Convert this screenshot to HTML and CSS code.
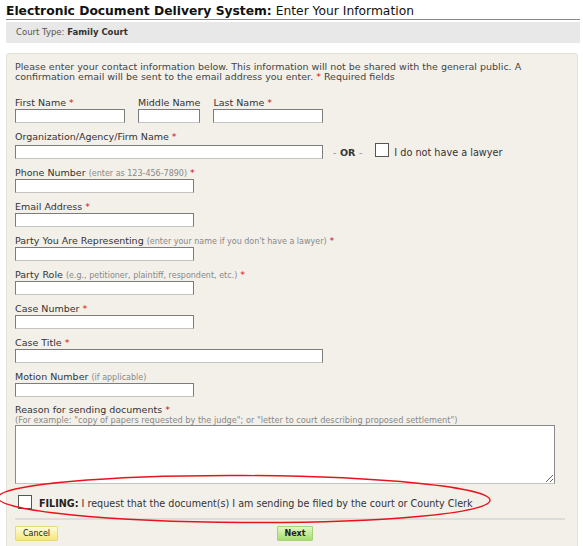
FILE: index.html
```html
<!DOCTYPE html>
<html>
<head>
<meta charset="utf-8">
<link rel="stylesheet" href="styles.css">
</head>
<body>
<div class="page">
  <h1 class="title"><b>Electronic Document Delivery System:</b> Enter Your Information</h1>
  <div class="court">Court Type: <b>Family Court</b></div>
  <div class="panel">
    <p class="intro">Please enter your contact information below. This information will not be shared with the general public. A confirmation email will be sent to the email address you enter. <span class="req">*</span> Required fields</p>

    <div class="names">
      <div class="field">
        <label>First Name <span class="req">*</span></label>
        <input class="in w-first" type="text">
      </div>
      <div class="field">
        <label>Middle Name</label>
        <input class="in w-mid" type="text">
      </div>
      <div class="field">
        <label>Last Name <span class="req">*</span></label>
        <input class="in w-first" type="text">
      </div>
    </div>

    <div class="field org">
      <label>Organization/Agency/Firm Name <span class="req">*</span></label>
      <div class="orgrow">
        <input class="in w-long" type="text">
        <span class="or">- <b>OR</b> -</span>
        <span class="box"></span>
        <span class="nolawyer">I do not have a lawyer</span>
      </div>
    </div>

    <div class="field">
      <label>Phone Number <span class="hint">(enter as 123-456-7890)</span> <span class="req">*</span></label>
      <input class="in w-med" type="text">
    </div>
    <div class="field">
      <label>Email Address <span class="req">*</span></label>
      <input class="in w-med" type="text">
    </div>
    <div class="field">
      <label>Party You Are Representing <span class="hint">(enter your name if you don't have a lawyer)</span> <span class="req">*</span></label>
      <input class="in w-med" type="text">
    </div>
    <div class="field">
      <label>Party Role <span class="hint">(e.g., petitioner, plaintiff, respondent, etc.)</span> <span class="req">*</span></label>
      <input class="in w-med" type="text">
    </div>
    <div class="field">
      <label>Case Number <span class="req">*</span></label>
      <input class="in w-med" type="text">
    </div>
    <div class="field">
      <label>Case Title <span class="req">*</span></label>
      <input class="in w-long" type="text">
    </div>
    <div class="field">
      <label>Motion Number <span class="hint">(if applicable)</span></label>
      <input class="in w-med" type="text">
    </div>
    <div class="field reason">
      <label>Reason for sending documents <span class="req">*</span></label>
      <div class="note">(For example: "copy of papers requested by the judge"; or "letter to court describing proposed settlement")</div>
      <textarea class="ta"></textarea>
    </div>

    <div class="filing">
      <span class="box"></span>
      <span class="filing-text"><b>FILING:</b> I request that the document(s) I am sending be filed by the court or County Clerk</span>
    </div>

    <div class="actions">
      <button class="btn cancel">Cancel</button>
      <button class="btn next">Next</button>
    </div>
  </div>
  <svg class="circle" width="583" height="70" viewBox="0 0 583 70">
    <ellipse cx="244" cy="35" rx="246" ry="23.5" fill="none" stroke="#e8141b" stroke-width="1.4" transform="rotate(0.3 244 35)"/>
  </svg>
</div>
</body>
</html>
```

FILE: styles.css
```css
html, body {
  margin: 0;
  padding: 0;
  background: #ffffff;
}
body {
  font-family: "DejaVu Sans", Verdana, sans-serif;
  color: #333333;
  overflow: hidden;
}
.page {
  position: relative;
  width: 574px;
  margin-left: 6px;
}
.title {
  margin: 0;
  padding: 4px 0 0 0;
  height: 15px;
  font-size: 12.3px;
  font-weight: normal;
  line-height: 15px;
  color: #111111;
  border-bottom: 1px solid #8a8a8a;
  white-space: nowrap;
}
.title b {
  font-weight: bold;
}
.court {
  margin-top: 2px;
  height: 21px;
  line-height: 21px;
  background: #e8e8e8;
  padding-left: 10px;
  font-size: 8.5px;
  color: #555555;
}
.court b {
  color: #333333;
}
.panel {
  margin-top: 10px;
  width: 572px;
  height: 520px;
  background: #f3f0ea;
  border: 1px solid #e4e0d8;
  border-radius: 3px;
  box-sizing: border-box;
  padding: 8px 8px 0 8px;
}
.intro {
  margin: 0;
  font-size: 9.5px;
  line-height: 10px;
  color: #444444;
}
.req {
  color: #d01010;
}
.names {
  display: flex;
  gap: 13px;
  margin-top: 15px;
}
.field {
  margin-bottom: 8px;
}
.field label {
  display: block;
  font-size: 9.5px;
  line-height: 12px;
  height: 12px;
  margin-bottom: 0;
  padding-top: 1px;
  margin-top: -1px;
  color: #333333;
  white-space: nowrap;
}
.hint {
  font-size: 8px;
  color: #888888;
}
.in {
  display: block;
  box-sizing: border-box;
  height: 14px;
  margin: 0;
  padding: 0 2px;
  background: #ffffff;
  border: 1px solid #7c7c7c;
  border-bottom-color: #c4c4c4;
  border-radius: 0;
  font-size: 9px;
}
.w-first { width: 110px; }
.w-mid { width: 62px; }
.w-med { width: 179px; }
.w-long { width: 308px; }
.org {
  margin-bottom: 6px;
}
.orgrow {
  display: flex;
  align-items: center;
  height: 18px;
  font-size: 9.5px;
}
.or {
  margin-left: 10px;
  color: #888888;
  font-size: 9.5px;
  word-spacing: 0.5px;
}
.or b {
  color: #333333;
}
.box {
  display: inline-block;
  box-sizing: border-box;
  width: 14px;
  height: 14px;
  background: #ffffff;
  border: 1px solid #555555;
  flex: none;
}
.orgrow .box {
  margin-left: 13px;
  margin-top: -4px;
}
.nolawyer {
  margin-left: 5px;
  font-size: 9.7px;
  color: #333333;
}
.reason {
  margin-top: -2px;
  margin-bottom: 0;
}
.note {
  font-size: 8.2px;
  line-height: 9px;
  color: #888888;
  white-space: nowrap;
}
.ta {
  display: block;
  box-sizing: border-box;
  width: 540px;
  height: 59px;
  margin: 0;
  background: #ffffff;
  border: 1px solid #8a8a8a;
  border-bottom-color: #c4c4c4;
  border-radius: 0;
}
.filing {
  display: flex;
  align-items: flex-end;
  margin-top: 10px;
  margin-left: 3px;
  height: 15px;
  gap: 7px;
  color: #333333;
  white-space: nowrap;
}
.filing-text {
  font-size: 9.6px;
  line-height: 10px;
}
.filing b {
  color: #222222;
}
.actions {
  margin-top: 9px;
  width: 550px;
  border-top: 2px solid #dcdcdc;
  padding-top: 6px;
  display: flex;
  gap: 219px;
}
.btn {
  box-sizing: border-box;
  height: 15px;
  padding: 0 5px;
  font-family: "DejaVu Sans", sans-serif;
  font-size: 8px;
  line-height: 13px;
  border-radius: 1px;
  color: #222222;
  cursor: pointer;
}
.cancel {
  width: 43px;
  background: linear-gradient(#fffbd8, #f4e77a);
  border: 1px solid #e7da7c;
}
.next {
  width: 36px;
  font-weight: bold;
  background: linear-gradient(#e2f7c0, #a6dc70);
  border: 1px solid #a8d27a;
}
.circle {
  position: absolute;
  left: -6px;
  top: 464px;
  pointer-events: none;
}
```
